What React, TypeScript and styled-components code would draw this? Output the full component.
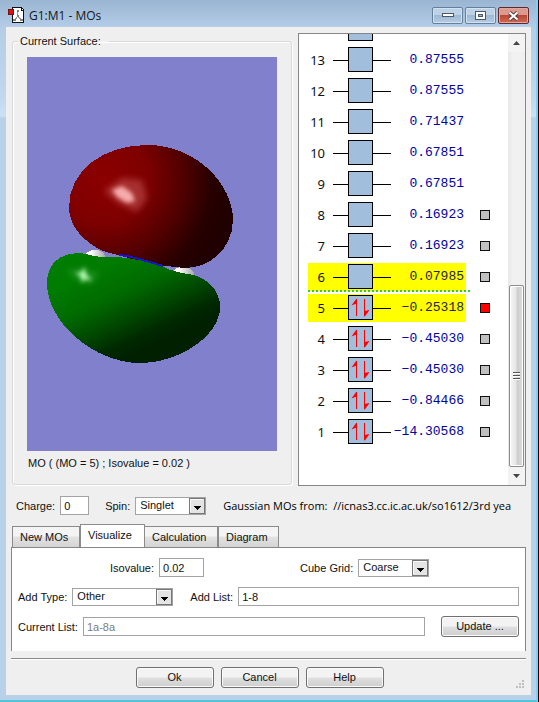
import React, { useState } from "react";
import styled, { createGlobalStyle } from "styled-components";

const uiFont = '"Liberation Sans", Arial, sans-serif';
const titleFont = '"Open Sans", "Noto Sans", sans-serif';

const GlobalStyle = createGlobalStyle`
  * { box-sizing: border-box; }
  html, body { margin: 0; height: 100%; }
  body { background: #000; font: 11px/14px ${uiFont}; color: #111; }
  #root { height: 100%; }
  input, select, button { font: inherit; color: inherit; margin: 0; border-radius: 0; }
`;

const Frame = styled.div`
  min-height: 100%;
  margin-right: 1px;
  padding: 0 5px 5px 6px;
  display: flex;
  flex-direction: column;
  background: linear-gradient(#9ab5d2 0, #b4cce6 27px, #c3d8ee 100px, #cde1f5 116px, #b9d0e9 118px);
  border-right: 2px solid #7fd0f2;
  border-bottom: 2px solid #52c4dc;
`;

const TitleBar = styled.header`
  height: 27px;
  display: flex;
  align-items: flex-start;
  padding: 7px 2px 0;
`;

const Title = styled.h1`
  flex: 1;
  margin: 0 0 0 4px;
  font: 12px/17px ${titleFont};
  color: #10181f;
`;

const WindowButtons = styled.div`
  display: flex;
  gap: 2px;
`;

const WindowButton = styled.button<{ $close?: boolean }>`
  width: 31px;
  height: 17px;
  padding: 0;
  display: grid;
  place-items: center;
  border: 1px solid ${(p) => (p.$close ? "#5c2a2e" : "#66809c")};
  border-radius: 2px;
  box-shadow: inset 0 0 0 1px ${(p) => (p.$close ? "#e0a79d" : "#d3e2f1")};
  background: ${(p) =>
    p.$close
      ? "linear-gradient(#dc9a8e 0 45%, #bd4632 50%, #cf6b55)"
      : "linear-gradient(#bed2e7 0 45%, #9fb9d4 50%, #b5cce4)"};
`;

const Client = styled.main`
  flex: 1;
  display: flex;
  flex-direction: column;
  background: #efefef;
  padding: 6px 5px 7px;
`;

const Top = styled.div`
  display: grid;
  grid-template-columns: minmax(0, 280fr) minmax(0, 228fr);
  gap: 6px;
  padding-left: 1px;
`;

const Surface = styled.fieldset`
  min-width: 0;
  margin: 1px 0 2px;
  padding: 8px 14px 14px;
  border: 1px solid #d8d8d8;
  border-radius: 3px;
  box-shadow: inset 1px 1px #fff, 1px 1px #fff;
`;

const Legend = styled.legend`
  margin-left: -9px;
  padding: 0 8px 0 2px;
  line-height: 15px;
`;

const Scene = styled.svg`
  display: block;
  width: 100%;
  height: 394px;
  background: #8080cc;
`;

const Caption = styled.p`
  margin: 5px 1px 0;
  white-space: nowrap;
`;

const Levels = styled.section`
  display: flex;
  height: 453px;
  border: 1px solid #85858a;
  background: #fff;
  overflow: hidden;
`;

const LevelView = styled.div`
  flex: 1;
  min-width: 0;
  display: flex;
  flex-direction: column;
  justify-content: flex-end;
  padding: 0 0 36px 9px;
  overflow: hidden;
`;

const LevelTable = styled.table`
  width: 182px;
  table-layout: fixed;
  border-collapse: separate;
  border-spacing: 0 3px;
  font: 13px/28px "Liberation Mono", monospace;
`;

const LevelRow = styled.tr<{ $lit: boolean; $homoEdge: boolean }>`
  position: relative;
  height: 28px;
  td, th {
    padding: 0;
    height: 28px;
    background: ${(p) => (p.$lit ? "#ffff00" : "transparent")};
  }
  td:last-child { background: transparent; }
  ${(p) =>
    p.$homoEdge &&
    `&::after {
      content: "";
      position: absolute;
      left: 0;
      top: 27px;
      width: 162px;
      border-top: 2px dotted #33cc33;
    }`}
`;

const LevelNumber = styled.th`
  width: 17px;
  text-align: right;
  font-weight: 400;
  font-family: "Noto Sans", sans-serif;
  color: #111;
`;

const LevelGlyph = styled.td`
  width: 66px;
  svg { display: block; margin-left: auto; }
`;

const LevelEnergy = styled.td<{ $lit: boolean }>`
  width: 75px;
  white-space: nowrap;
  color: ${(p) => (p.$lit ? "#26264c" : "#0000a0")};
  span { float: right; margin-right: 2px; }
`;

const LevelToggle = styled.td`
  width: 24px;
`;

const Toggle = styled.input`
  appearance: none;
  display: block;
  width: 10px;
  height: 10px;
  margin-left: auto !important;
  border: 1px solid #111;
  background: #c0c0c0;
  &:checked { background: #f00; }
`;

const ScrollBar = styled.div`
  width: 17px;
  display: flex;
  flex-direction: column;
  background: linear-gradient(90deg, #e8e8e8, #f1f1f1 30%, #efefef);
`;

const ScrollArrow = styled.button`
  height: 18px;
  padding: 0;
  border: 0;
  display: grid;
  place-items: center;
  background: #f3f3f3;
`;

const ScrollSpace = styled.div`
  flex: 234;
`;

const ScrollThumb = styled.div`
  flex: 181;
  margin: 0 1px;
  display: grid;
  place-items: center;
  border: 1px solid #8c8c8c;
  border-radius: 2px;
  box-shadow: inset 0 0 0 1px #fff;
  background: linear-gradient(90deg, #f6f6f6, #e6e6e6 45%, #cdcdcd 55%, #dcdcdc);
`;

const Line = styled.div`
  display: flex;
  align-items: center;
  gap: 5px;
`;

const StateLine = styled(Line)`
  padding: 9px 6px 9px 5px;
`;

const Push = styled.span<{ $size: number }>`
  flex: 0 0 ${(p) => p.$size}px;
`;

const Label = styled.label`
  white-space: nowrap;
`;

const TextBox = styled.input<{ $width?: number }>`
  ${(p) => (p.$width ? `flex: 0 0 ${p.$width}px; width: ${p.$width}px;` : "flex: 1; min-width: 0;")}
  height: 19px;
  padding: 1px 3px 0;
  border: 1px solid #a3a3a3;
  background: #fff;
  &:disabled { color: #7d7d7d; }
`;

const SelectWrap = styled.span<{ $width: number }>`
  display: flex;
  flex: 0 0 ${(p) => p.$width}px;
  position: relative;
  height: 18px;
  svg { position: absolute; right: 1px; top: 1px; pointer-events: none; }
`;

const SelectBox = styled.select`
  appearance: none;
  width: 100%;
  height: 18px;
  padding: 0 18px 1px 4px;
  border: 1px solid #a3a3a3;
  background: #fff;
`;

const Source = styled.p`
  flex: 1;
  min-width: 0;
  margin: 0;
  overflow: hidden;
  white-space: pre;
  font: 11px/16px ${titleFont};
  color: #000;
`;

const Tabs = styled.div`
  display: flex;
  align-items: flex-end;
  height: 24px;
  margin-bottom: -1px;
  padding-left: 1px;
`;

const Tab = styled.button<{ $width: number }>`
  width: ${(p) => p.$width}px;
  height: 22px;
  padding: 0 0 1px 7px;
  text-align: left;
  border: 1px solid #8b8b8b;
  background: linear-gradient(#f4f4f4 0 45%, #e3e3e3 50%, #d4d4d4);
  &[aria-selected="true"] {
    height: 24px;
    padding-bottom: 3px;
    border-bottom-color: #fff;
    background: #fff;
    margin-right: -1px;
  }
`;

const Pane = styled.section`
  display: flex;
  flex-direction: column;
  gap: 10px;
  padding: 10px 6px 14px;
  border: 1px solid #85858a;
  border-bottom: 0;
  background: #fff;
`;

const Footer = styled.footer`
  position: relative;
  display: flex;
  justify-content: center;
  gap: 7px;
  margin-top: 7px;
  padding: 8px 18px 0 0;
  border-top: 1px solid #8a8a8a;
  box-shadow: inset 0 1px #fff;
`;

const Button = styled.button`
  width: 78px;
  height: 21px;
  padding: 0 0 1px;
  border: 1px solid #707070;
  border-radius: 3px;
  box-shadow: inset 0 0 0 1px #fbfbfb;
  background: linear-gradient(#f3f3f3 0 48%, #dfdfdf 52%, #cecece);
`;

const Grip = styled.svg`
  position: absolute;
  right: 2px;
  bottom: 0;
`;

function DocIcon() {
  return (
    <svg width="17" height="17" viewBox="0 0 17 17" shapeRendering="crispEdges" aria-hidden="true">
      <path d="M4.500 .5h9l2 2v13h-11z" fill="#fff" stroke="#111" />
      <path d="M13 1v2h2" fill="none" stroke="#111" />
      <path d="M9.500 4v5M10 9l-3 4M10 9l3 4" stroke="#999" fill="none" />
      <path d="M9 3h2v2H9zM9 8h2v2H9zM5 12h3v2H5zM12 12h3v2h-3z" fill="#808080" />
      <path d="M.5 2.500h5v5h-5z" fill="#e00c10" stroke="#711" />
    </svg>
  );
}

function OrbitalScene() {
  return (
    <Scene viewBox="0 0 250 394" role="img" aria-label="Molecular orbital surface">
      <defs>
        <radialGradient id="red" gradientUnits="userSpaceOnUse" cx="76" cy="122" r="128">
          <stop offset="0" stopColor="#8c0000" />
          <stop offset=".35" stopColor="#7e0000" />
          <stop offset=".6" stopColor="#560000" />
          <stop offset=".85" stopColor="#280000" />
          <stop offset="1" stopColor="#200000" />
        </radialGradient>
        <linearGradient id="green" gradientUnits="userSpaceOnUse" x1="85" y1="205" x2="125" y2="290">
          <stop offset="0" stopColor="#007c00" />
          <stop offset=".35" stopColor="#006a00" />
          <stop offset=".6" stopColor="#004a00" />
          <stop offset=".85" stopColor="#002800" />
          <stop offset="1" stopColor="#002000" />
        </linearGradient>
        <linearGradient id="white" x1="0" y1="0" x2="1" y2="0">
          <stop offset=".3" stopColor="#fff" />
          <stop offset="1" stopColor="#a8a8a8" />
        </linearGradient>
        <filter id="soft" x="-50%" y="-50%" width="200%" height="200%">
          <feGaussianBlur stdDeviation="3" />
        </filter>
        <filter id="softer" x="-50%" y="-50%" width="200%" height="200%">
          <feGaussianBlur stdDeviation="2" />
        </filter>
      </defs>
      <g shapeRendering="crispEdges">
        <ellipse cx="68" cy="200" rx="10" ry="7" fill="url(#white)" />
        <ellipse cx="156" cy="217" rx="11" ry="7" fill="url(#white)" />
        <path
          d="M42 150C42 112 78 88 120 88C170 88 206 128 206 163C206 190 184 211 158 211C125 209 95 199 76 194C55 184 42 168 42 150Z"
          fill="url(#red)"
        />
        <path
          d="M20 226C20 206 34 196 52 196C60 196 66 200 77 200L90 200C106 201 120 205 133 208C144 215 156 216 167 218C183 223 193 235 193 250C193 280 150 306 113 306C68 306 20 266 20 226Z"
          fill="url(#green)"
        />
        <path d="M92 198l8 1 12 3 14 4 10 3" fill="none" stroke="#1616c8" strokeWidth="2" />
      </g>
      <path d="M77 134l18-13 20 2 5 18-10 14-19-9z" fill="#c05050" opacity=".6" filter="url(#soft)" />
      <path d="M85 133l10-4 10 7 3 8-8 2-10-6z" fill="#ffb9b9" opacity=".9" filter="url(#softer)" />
      <path d="M38 213l15 0 5-4 4 6 11 0-9 12-13-4z" fill="#3ba03b" opacity=".5" filter="url(#soft)" />
      <path d="M48 215l6 1 3-6 2 7 6 7-7-2-3 4-1-6z" fill="#b5ffb5" filter="url(#softer)" />
    </Scene>
  );
}

function LevelDrawing({ filled }: { filled: boolean }) {
  return (
    <svg width="58" height="26" viewBox="0 0 58 26" shapeRendering="crispEdges" aria-hidden="true">
      <path d="M0 13.500h58" stroke="#000" />
      <rect x="15.500" y=".5" width="24" height="24" fill="#a2bedd" stroke="#000" />
      {filled && (
        <g fill="#f00" stroke="#f00" shapeRendering="auto">
          <path d="M23.500 4v17" />
          <path d="M23.500 3.500l-5 7 5-2z" stroke="none" />
          <path d="M31.500 4v17" />
          <path d="M31.500 22l5-7-5 1z" stroke="none" />
        </g>
      )}
    </svg>
  );
}

function Drop({ id, width, options }: { id: string; width: number; options: string[] }) {
  return (
    <SelectWrap $width={width}>
      <SelectBox id={id}>
        {options.map((o) => (
          <option key={o}>{o}</option>
        ))}
      </SelectBox>
      <svg width="16" height="16" viewBox="0 0 16 16" shapeRendering="crispEdges" aria-hidden="true">
        <path d="M.5 .5h15v15H.5z" fill="#e4e4e4" stroke="#777" />
        <path d="M1.500 14V1.500H14" fill="none" stroke="#fafafa" />
        <path d="M5 8h7v1h-1v1h-1v1H9v1H8v-1H7v-1H6V9H5z" fill="#000" />
      </svg>
    </SelectWrap>
  );
}

const levels = [
  [14, ""],
  [13, "0.87555"],
  [12, "0.87555"],
  [11, "0.71437"],
  [10, "0.67851"],
  [9, "0.67851"],
  [8, "0.16923"],
  [7, "0.16923"],
  [6, "0.07985"],
  [5, "−0.25318"],
  [4, "−0.45030"],
  [3, "−0.45030"],
  [2, "−0.84466"],
  [1, "−14.30568"],
] as [number, string][];

const tabs = [
  { name: "New MOs", width: 68 },
  { name: "Visualize", width: 65 },
  { name: "Calculation", width: 74 },
  { name: "Diagram", width: 61 },
];

export default function App() {
  const [tab, setTab] = useState("Visualize");
  return (
    <>
      <GlobalStyle />
      <Frame>
        <TitleBar>
          <DocIcon />
          <Title>G1:M1 - MOs</Title>
          <WindowButtons>
            <WindowButton aria-label="Minimize">
              <svg width="12" height="5" shapeRendering="crispEdges">
                <path d="M.5 .5h11v3H.5z" fill="#fff" stroke="#4c5766" />
              </svg>
            </WindowButton>
            <WindowButton aria-label="Maximize">
              <svg width="11" height="9" shapeRendering="crispEdges">
                <path d="M.5 .5h10v8H.5z" fill="#fff" stroke="#4c5766" />
                <path d="M3.500 3.500h4v2h-4z" fill="#9fb9d4" stroke="#4c5766" />
              </svg>
            </WindowButton>
            <WindowButton $close aria-label="Close">
              <svg width="13" height="10" viewBox="0 0 13 10">
                <path d="M2.500 1.500l8 7M10.500 1.500l-8 7" stroke="#553c44" strokeWidth="4" />
                <path d="M2.500 1.500l8 7M10.500 1.500l-8 7" stroke="#fff" strokeWidth="2" />
              </svg>
            </WindowButton>
          </WindowButtons>
        </TitleBar>
        <Client>
          <Top>
            <Surface>
              <Legend>Current Surface:</Legend>
              <OrbitalScene />
              <Caption>MO ( (MO = 5) ; Isovalue = 0.02 )</Caption>
            </Surface>
            <Levels aria-label="Orbital energies">
              <LevelView>
                <LevelTable>
                  <tbody>
                    {levels.map(([n, energy]) => {
                      const lit = n === 5 || n === 6;
                      return (
                        <LevelRow key={n} $lit={lit} $homoEdge={n === 6}>
                          <LevelNumber scope="row">{energy && n}</LevelNumber>
                          <LevelGlyph>
                            <LevelDrawing filled={n <= 5} />
                          </LevelGlyph>
                          <LevelEnergy $lit={lit}>
                            <span>{energy}</span>
                          </LevelEnergy>
                          <LevelToggle>
                            {n <= 8 && (
                              <Toggle type="checkbox" defaultChecked={n === 5} aria-label={`Surface for orbital ${n}`} />
                            )}
                          </LevelToggle>
                        </LevelRow>
                      );
                    })}
                  </tbody>
                </LevelTable>
              </LevelView>
              <ScrollBar>
                <ScrollArrow aria-label="Scroll up">
                  <svg width="7" height="4">
                    <path d="M0 4L3.500 0 7 4z" fill="#444" />
                  </svg>
                </ScrollArrow>
                <ScrollSpace />
                <ScrollThumb>
                  <svg width="7" height="8" shapeRendering="crispEdges">
                    <path d="M0 .5h7M0 3.500h7M0 6.500h7" stroke="#555" />
                    <path d="M0 1.500h7M0 4.500h7M0 7.500h7" stroke="#fff" />
                  </svg>
                </ScrollThumb>
                <ScrollArrow aria-label="Scroll down">
                  <svg width="7" height="4">
                    <path d="M0 0L3.500 4 7 0z" fill="#444" />
                  </svg>
                </ScrollArrow>
              </ScrollBar>
            </Levels>
          </Top>
          <StateLine>
            <Label htmlFor="charge">Charge:</Label>
            <TextBox id="charge" $width={29} defaultValue="0" />
            <Push $size={6} />
            <Label htmlFor="spin">Spin:</Label>
            <Drop id="spin" width={71} options={["Singlet", "Triplet"]} />
            <Push $size={7} />
            <Source>{"Gaussian MOs from:  //icnas3.cc.ic.ac.uk/so1612/3rd yea"}</Source>
          </StateLine>
          <Tabs role="tablist">
            {tabs.map((t) => (
              <Tab key={t.name} role="tab" $width={t.width} aria-selected={tab === t.name} onClick={() => setTab(t.name)}>
                {t.name}
              </Tab>
            ))}
          </Tabs>
          <Pane role="tabpanel">
            <Line>
              <Push $size={87} />
              <Label htmlFor="iso">Isovalue:</Label>
              <TextBox id="iso" $width={45} defaultValue="0.02" />
              <Push $size={86} />
              <Label htmlFor="grid">Cube Grid:</Label>
              <Drop id="grid" width={71} options={["Coarse", "Medium", "Fine"]} />
            </Line>
            <Line>
              <Label htmlFor="type">Add Type:</Label>
              <Drop id="type" width={101} options={["Other"]} />
              <Push $size={7} />
              <Label htmlFor="list">Add List:</Label>
              <TextBox id="list" defaultValue="1-8" />
            </Line>
            <Line>
              <Label htmlFor="current">Current List:</Label>
              <TextBox id="current" defaultValue="1a-8a" disabled />
              <Push $size={6} />
              <Button>Update ...</Button>
            </Line>
          </Pane>
          <Footer>
            <Button>Ok</Button>
            <Button>Cancel</Button>
            <Button>Help</Button>
            <Grip width="8" height="8" shapeRendering="crispEdges" aria-hidden="true">
              <path d="M6 0h2v2H6zM3 3h2v2H3zM6 3h2v2H6zM0 6h2v2H0zM3 6h2v2H3zM6 6h2v2H6z" fill="#c0c0c0" />
            </Grip>
          </Footer>
        </Client>
      </Frame>
    </>
  );
}
